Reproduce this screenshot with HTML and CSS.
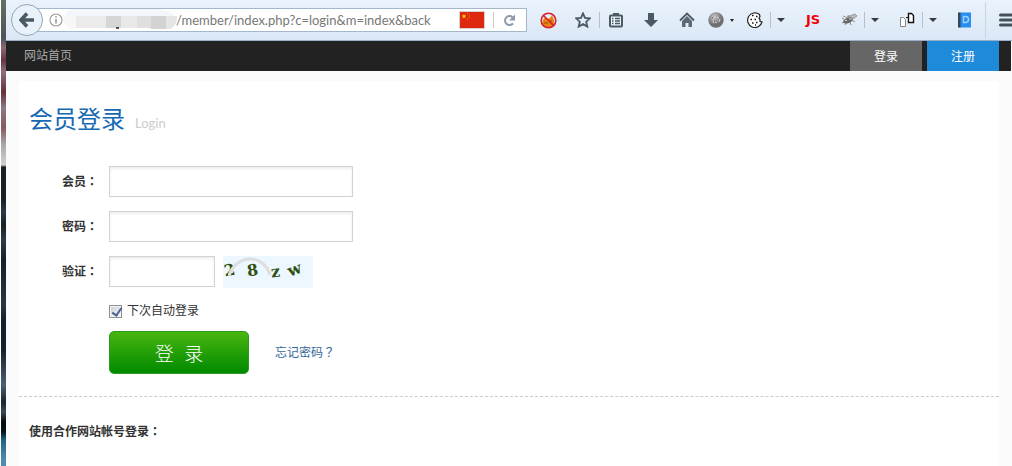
FILE: index.html
```html
<!DOCTYPE html>
<html lang="zh-CN">
<head>
<meta charset="utf-8">
<title>会员登录</title>
<link rel="stylesheet" href="styles.css">
</head>
<body>
<div class="desktop"></div>
<div class="window">
  <header class="toolbar">
    <button class="back" type="button" aria-label="后退">
      <svg width="16" height="16" viewBox="0 0 16 16"><path d="M8 1.500 2 8l6 6.500M3 8h12" fill="none" stroke="#4b5866" stroke-width="3.600"/></svg>
    </button>
    <div class="urlbar">
      <svg class="info" width="14" height="14" viewBox="0 0 14 14"><circle cx="7" cy="7" r="6" fill="none" stroke="#a0a0a0" stroke-width="1.200"/><path d="M7 6v4.500M7 3.200v1.600" stroke="#999" stroke-width="1.600"/></svg>
      <svg class="mosaic" width="115" height="22" viewBox="0 0 115 22">
        <path d="M14 0h82l7 2a10 9 0 0 1 0 18H88l-6-1H11A9 9 0 0 1 11 0z" fill="#f3f6fa"/>
        <path d="M0 8h13v12H8q-8-3-8-12z" fill="#f7f7f8"/>
        <path d="M13 7h30v12H13z" fill="#ebebeb"/>
        <path d="M43 7h15v12H43z" fill="#d5d6d6"/>
        <path d="M58 7h16v12H58z" fill="#e9e9e9"/>
        <path d="M74 7h14v12H74z" fill="#dfdfdf"/>
        <path d="M88 7h15v13H88z" fill="#d3d3d3"/>
        <path d="M103 7h11q1 9-7 13h-4z" fill="#e4e5e5"/>
        <path d="M53 19h3" stroke="#222" stroke-width="1.500"/>
      </svg>
      <input class="address" type="text" aria-label="地址" value="/member/index.php?c=login&amp;m=index&amp;back">
      <svg class="flag" width="26" height="18" viewBox="0 0 26 18"><path d="M.5.5h25v17H.5z" fill="#de2910" stroke="#cfcfd4"/><path d="m5 3 .7 1.500 1.600.1-1.200 1 .4 1.600L5 6.300l-1.500.9.4-1.600-1.200-1 1.600-.1z" fill="#ffde00"/><path d="M8 2h1M10 4h1M10 6h1M8 8h1" stroke="#e98a08"/></svg>
      <span class="divider"></span>
      <button class="reload" type="button" aria-label="刷新">
        <svg width="13" height="13" viewBox="0 0 13 13"><path d="M9.500 3.200A4.500 4.500 0 1 0 10 9.500" fill="none" stroke="#8c9aa8" stroke-width="2"/><path d="M12 .5v6H6z" fill="#8c9aa8"/></svg>
      </button>
    </div>
    <button class="tool tool-wide" type="button" aria-label="屏蔽">
      <svg width="17" height="17" viewBox="0 0 17 17"><path d="m3 8 2-3 2 2 3-1 2-3 2 5v4l-3 3H4l-2-3z" fill="#e78212"/><path d="M4 11h4M9 9h3" stroke="#8c4a10"/><circle cx="8.500" cy="8.500" r="7.300" fill="none" stroke="#d7202c" stroke-width="1.600"/><path d="m3.500 3.500 10 10" stroke="#d7202c" stroke-width="1.600"/></svg>
    </button>
    <button class="tool tool-star" type="button" aria-label="书签">
      <svg width="16" height="16" viewBox="0 0 16 16"><path d="m8 1.400 2 4.500 4.900.5-3.700 3.300 1.100 4.900L8 12.100l-4.300 2.500 1.100-4.900L1.100 6.400 6 5.900z" fill="none" stroke="#4b5866" stroke-width="1.800"/></svg>
    </button>
    <span class="sep"></span>
    <button class="tool tool-list" type="button" aria-label="书签列表">
      <svg width="14" height="16" viewBox="0 0 14 16"><rect x="1" y="3.500" width="12" height="11" rx="1" fill="#eef4fb" stroke="#4b5866" stroke-width="2"/><path d="M4 1h6v3H4z" fill="#4b5866"/><path d="M3 6.500h1.500M6 6.500h5M3 9h1.500M6 9h5M3 11.500h1.500M6 11.500h5" stroke="#4b5866" stroke-width="1.300"/></svg>
    </button>
    <button class="tool tool-down" type="button" aria-label="下载">
      <svg width="16" height="16" viewBox="0 0 16 16"><path d="M5 1h6v7h4l-7 7-7-7h4z" fill="#4b5866"/></svg>
    </button>
    <button class="tool tool-home" type="button" aria-label="主页">
      <svg width="16" height="16" viewBox="0 0 16 16"><path d="m1 8.500 7-7 7 7" fill="none" stroke="#4b5866" stroke-width="1.800"/><path d="m3 9 5-5 5 5v6H9.500v-4h-3v4H3z" fill="#5c6976"/></svg>
    </button>
    <button class="tool tool-ball" type="button" aria-label="代理">
      <svg width="16" height="16" viewBox="0 0 16 16"><defs><radialGradient id="ball" cx="40%" cy="30%"><stop offset="0" stop-color="#c8c8c8"/><stop offset="1" stop-color="#707070"/></radialGradient></defs><circle cx="8" cy="8" r="7.700" fill="url(#ball)"/><path d="M4 7l2 1-1 3M9 5l3 2-1 3M7 10l2 1" fill="none" stroke="#ccc"/><path d="M6 9h1M11 6h1M4 6h1M8 12h1" stroke="#555"/></svg>
    </button>
    <span class="dot-caret"></span>
    <button class="tool tool-cookie" type="button" aria-label="Cookie">
      <svg width="16" height="16" viewBox="0 0 16 16"><path d="M12.500 2.500A7.300 7.300 0 1 0 15 10l-2-.5v-2l-1-1 1-2z" fill="#fff" stroke="#222" stroke-width="1.200"/><path d="M5 3.500h1.500M9 4.500h1.500M3.500 7.500H5M7.500 7.500H9M5 11h1.500M9 10.500h1.500M8 13h1" stroke="#111" stroke-width="1.400"/></svg>
    </button>
    <span class="sep"></span>
    <button class="caret" type="button" aria-label="Cookie 菜单"></button>
    <button class="tool tool-js" type="button">JS</button>
    <button class="tool tool-fly" type="button" aria-label="调试">
      <svg width="17" height="16" viewBox="0 0 17 16"><path d="m6 5 8-3 2 2-7 5zM2 4l5 2" fill="#bbb" stroke="#999"/><ellipse cx="7" cy="8.500" rx="5" ry="2.600" transform="rotate(-20 7 8.500)" fill="#666"/><path d="m3 10-2 1M5 11l-1 2M9 10l1 3M11 8l3 2M3 7 1 6M8 5l-1-2" stroke="#888"/><path d="M4 8.500h2M8 7h3" stroke="#ddd"/></svg>
    </button>
    <span class="sep"></span>
    <button class="caret" type="button" aria-label="调试菜单"></button>
    <button class="tool tool-pages" type="button" aria-label="页面">
      <svg width="16" height="16" viewBox="0 0 16 16"><path d="M1.500 5.500h3l2 2v7h-5z" fill="#fff" stroke="#888"/><path d="M9.500 1.500h3l2 2v7h-5z" fill="#fff" stroke="#111" stroke-width="1.400"/><path d="M7 5.500h2.500" stroke="#111"/></svg>
    </button>
    <span class="sep"></span>
    <button class="caret" type="button" aria-label="页面菜单"></button>
    <button class="tool tool-dict" type="button" aria-label="词典">
      <svg width="13" height="16" viewBox="0 0 13 16"><path d="M1 .5h12v15H1z" fill="#278cf0"/><path d="M0 .5h2.500v15H0z" fill="#35475b"/><path d="M5.500 4.500h2a3 3 0 0 1 0 6h-2z" fill="none" stroke="#9bd1ff" stroke-width="1.500"/></svg>
    </button>
    <span class="sep sep-full"></span>
    <button class="menu" type="button" aria-label="菜单">
      <svg width="13" height="14" viewBox="0 0 13 14"><path d="M1.500 2H15M1.500 7H15M1.500 12H15" stroke="#45505b" stroke-width="3" stroke-linecap="round"/></svg>
    </button>
  </header>

  <nav class="nav">
    <a class="nav-home" href="#">网站首页</a>
    <a class="nav-tab nav-login" href="#">登录</a>
    <a class="nav-tab nav-register" href="#">注册</a>
  </nav>

  <main class="page">
    <h1 class="title">会员登录<span class="subtitle">Login</span></h1>
    <form class="form">
      <div class="row">
        <label class="label" for="user">会员<span class="mark" lang="zh-TW">：</span></label>
        <input class="field" id="user" type="text">
      </div>
      <div class="row">
        <label class="label" for="pass">密码<span class="mark" lang="zh-TW">：</span></label>
        <input class="field" id="pass" type="password">
      </div>
      <div class="row">
        <label class="label" for="code">验证<span class="mark" lang="zh-TW">：</span></label>
        <input class="field field-short" id="code" type="text">
        <svg class="captcha" width="90" height="32" viewBox="0 0 90 32" role="img" aria-label="验证码">
          <path d="M0 0h90v32H0z" fill="#edf7ff"/>
          <g class="captcha-text">
            <text x="1" y="20" transform="rotate(-10 5 15)">2</text>
            <text x="24" y="20" transform="rotate(-8 28 15)">8</text>
            <text x="48" y="21" transform="rotate(-6 52 17)">z</text>
            <text x="65" y="19" transform="rotate(-20 71 15)">w</text>
          </g>
          <path d="M6 20C12-1 40-4 47 19" fill="none" stroke="#dedede" stroke-width="3"/>
        </svg>
      </div>
      <div class="remember">
        <input class="check" id="auto" type="checkbox" checked>
        <label for="auto">下次自动登录</label>
      </div>
      <div class="actions">
        <button class="submit" type="submit">登&nbsp;&nbsp;录</button>
        <a class="forgot" href="#">忘记密码<span class="mark" lang="zh-TW">？</span></a>
      </div>
    </form>
    <h2 class="partners">使用合作网站帐号登录<span class="mark" lang="zh-TW">：</span></h2>
  </main>
</div>
</body>
</html>
```

FILE: styles.css
```css
* {
  box-sizing: border-box;
}

body {
  display: flex;
  min-height: 100vh;
  margin: 0;
  overflow: hidden;
  background: #fbfbfb;
  color: #333;
  font: 12px/20px "Liberation Sans", "Noto Sans CJK SC", sans-serif;
}

a {
  text-decoration: none;
}

button {
  padding: 0;
  border: 0;
  background: none;
  color: inherit;
  font-family: inherit;
}

svg {
  display: block;
  flex: none;
}

.mark {
  font-family: "Noto Sans CJK TC", sans-serif;
  line-height: 1;
}

.desktop {
  flex: none;
  width: 6px;
  border-left: 1px solid #fff;
  background: linear-gradient(#62705f 0, #4b535b 38px, #8d6874 48px, #663642 60px, #8b707e 72px, #633038 92px, #8b7986 108px, #87595f 128px, #aaa 145px, #d0d0d0 165px, #172128 167px, #172128 200px, #2b3b47 212px, #172128 225px, #2b3b47 240px, #14212a 260px, #273641 305px, #14212a 320px, #14212a 350px, #4b6075 385px, #17262d 402px, #3c4a57 412px, #020c10 422px, #06131a 432px, #1e637f 440px, #508caf 460px);
}

.window {
  flex: 1;
  min-width: 0;
}

.toolbar {
  display: flex;
  align-items: center;
  height: 41px;
  padding-left: 5px;
  border-bottom: 1px solid #9bb0c8;
  background: linear-gradient(#eaf3fc, #dae7f5);
}

.back {
  display: flex;
  flex: none;
  z-index: 1;
  align-items: center;
  justify-content: center;
  width: 32px;
  height: 32px;
  border: 1px solid #94a7b9;
  border-radius: 50%;
  background: #e9f2fb;
}

.urlbar {
  display: flex;
  flex: 1;
  align-items: center;
  min-width: 0;
  height: 24px;
  margin-left: -14px;
  padding-left: 19px;
  border: 1px solid #a3b7cd;
  background: #fff;
}

.mosaic {
  margin-right: -2px;
}

.address {
  flex: 1;
  min-width: 0;
  height: 22px;
  padding: 0;
  border: 0;
  background: none;
  color: #777;
  font: 13px/22px Lato, sans-serif;
}

.flag {
  margin-left: 24px;
}

.divider {
  width: 1px;
  height: 16px;
  margin-left: 8px;
  background: #ccc;
}

.reload {
  margin: 0 10px 0 9px;
}

.tool {
  display: flex;
  flex: none;
  align-items: center;
  justify-content: center;
  height: 32px;
}

.tool-wide {
  width: 36px;
  margin-left: 3px;
}

.tool-star {
  width: 33px;
}

.tool-list {
  width: 32px;
}

.tool-down {
  width: 38px;
}

.tool-home {
  width: 34px;
}

.tool-ball {
  width: 24px;
}

.tool-cookie {
  width: 30px;
  margin-left: 4px;
}

.tool-js {
  width: 44px;
  color: #f00009;
  font: bold 13px/16px "DejaVu Sans", sans-serif;
}

.tool-fly {
  width: 29px;
}

.tool-pages {
  width: 30px;
  margin-left: 7px;
}

.tool-dict {
  width: 42px;
}

.sep {
  flex: none;
  width: 1px;
  height: 16px;
  background: #b5c0cc;
}

.sep-full {
  height: 36px;
  background: #c9d5e2;
}

.caret {
  display: flex;
  flex: none;
  justify-content: center;
  width: 20px;
}

.caret::before {
  border: 4px solid transparent;
  border-top-color: #333c45;
  border-bottom: 0;
  content: "";
}

.dot-caret {
  flex: none;
  width: 4px;
  margin: 0 2px;
  border: 2px solid transparent;
  border-top: 3px solid #222;
  border-bottom: 0;
}

.menu {
  flex: none;
  padding-left: 13px;
}

.nav {
  display: flex;
  align-items: center;
  gap: 5px;
  height: 30px;
  margin-right: 1px;
  padding: 0 12px 0 18px;
  background: #222;
  line-height: 32px;
}

.nav-home {
  margin-right: auto;
  color: #aaa;
}

.nav-tab {
  width: 72px;
  height: 30px;
  color: #fff;
  text-align: center;
}

.nav-login {
  background: #666;
}

.nav-register {
  background: #1e8bda;
}

.page {
  min-height: calc(100vh - 81px);
  margin: 10px 13px 0;
  padding-top: 21px;
  background: #fff;
}

.title {
  margin: 0;
  padding-left: 10px;
  color: #1569b3;
  font-size: 24px;
  font-weight: 400;
  line-height: 36px;
}

.subtitle {
  margin-left: 10px;
  color: #ccc;
  font: 13px/20px Lato, sans-serif;
}

.form {
  padding: 28px 0 22px 10px;
  border-bottom: 1px dashed #ccc;
}

.row {
  display: flex;
  height: 31px;
  margin-bottom: 14px;
}

.label {
  width: 80px;
  padding-right: 11px;
  font-weight: 700;
  line-height: 33px;
  text-align: right;
}

.field {
  width: 244px;
  height: 31px;
  padding: 0 6px;
  border: 1px solid #d2d2d2;
  background: #fff;
  box-shadow: inset 0 2px 3px #eee;
}

.field-short {
  width: 106px;
}

.captcha {
  margin-left: 8px;
}

.captcha-text {
  fill: #2d5212;
  font: bold 16px "DejaVu Serif", serif;
}

.remember {
  display: flex;
  align-items: center;
  gap: 5px;
  padding-left: 80px;
}

.check {
  appearance: none;
  width: 13px;
  height: 13px;
  margin: 0;
  border: 1px solid #8e8f8f;
  background: linear-gradient(135deg, #cbcfd5, #f6f6f6);
  box-shadow: inset 0 0 0 1px #f4f4f4;
}

.check:checked::before {
  display: block;
  width: 4px;
  height: 8px;
  margin: 0 0 0 4px;
  border: solid #4a5f97;
  border-width: 0 2px 2px 0;
  content: "";
  transform: rotate(35deg);
}

.actions {
  display: flex;
  align-items: center;
  gap: 26px;
  margin-top: 10px;
  padding-left: 80px;
}

.submit {
  width: 140px;
  height: 43px;
  border: 1px solid #2b9a22;
  border-radius: 5px;
  background: linear-gradient(#48b50f, #008a00);
  color: #fff;
  font-size: 19px;
  font-weight: 300;
}

.forgot {
  color: #336699;
}

.partners {
  margin: 25px 0 0;
  padding-left: 10px;
  font-size: 12px;
  line-height: 20px;
}
```
